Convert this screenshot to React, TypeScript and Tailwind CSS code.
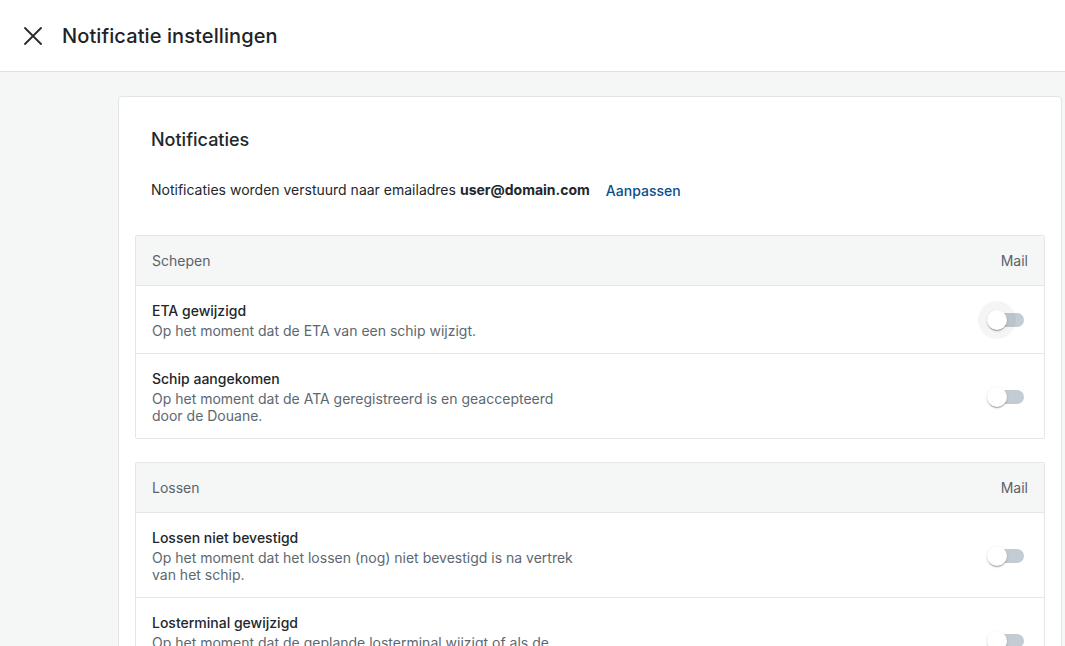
import React from "react";

type Item = { title: string; lines: string[]; hover?: boolean };

function Toggle({ hover }: { hover?: boolean }) {
  return (
    <div className="relative w-[58px] h-[38px] shrink-0">
      <div className="absolute left-[12px] top-[12px] w-[34px] h-[14px] rounded-full bg-[#c3ccd3]" />
      <div
        className={
          "absolute left-0 top-0 w-[38px] h-[38px] rounded-full flex items-center justify-center " +
          (hover ? "bg-[rgba(0,0,0,0.04)]" : "")
        }
      >
        <div className="w-[20px] h-[20px] rounded-full bg-white shadow-[0_2px_1px_-1px_rgba(0,0,0,0.2),0_1px_1px_0_rgba(0,0,0,0.14),0_1px_3px_0_rgba(0,0,0,0.12)]" />
      </div>
    </div>
  );
}

function Section({ name, items }: { name: string; items: Item[] }) {
  return (
    <div className="border border-[#e4e6e7] rounded-[2px]">
      <div className="h-[50px] bg-[#f5f6f6] border-b border-[#e4e6e7] flex items-center justify-between pl-[16px] pr-[16px] text-[14px] text-[#5a636a]">
        <span>{name}</span>
        <span>Mail</span>
      </div>
      {items.map((it, i) => (
        <div
          key={i}
          className={
            "flex items-center justify-between pl-[16px] pr-[8px] pt-[15px] pb-[14px] " +
            (i < items.length - 1 ? "border-b border-[#e4e6e7]" : "")
          }
        >
          <div>
            <div className="text-[14px] leading-[20px] font-medium text-[#22272b]">{it.title}</div>
            <div className="text-[14px] leading-[17px] text-[#5c6870] mt-[1px]">
              {it.lines.map((l, j) => (
                <div key={j}>{l}</div>
              ))}
            </div>
          </div>
          <Toggle hover={it.hover} />
        </div>
      ))}
    </div>
  );
}

export default function App() {
  return (
    <div
      className="w-[1065px] h-[646px] overflow-hidden bg-[#f5f6f6] flex flex-col"
      style={{ fontFamily: "Inter, 'Noto Sans', sans-serif" }}
    >
      <div className="h-[72px] shrink-0 bg-white border-b border-[#dfe1e2] flex items-center pl-[24px]">
        <svg width="18" height="18" viewBox="0 0 18 18" className="mr-[20px]">
          <path d="M1 1 L17 17 M17 1 L1 17" stroke="#2a2a2a" strokeWidth="1.8" strokeLinecap="round" />
        </svg>
        <span className="text-[20px] text-[#1f2326] font-medium tracking-[0.1px]">Notificatie instellingen</span>
      </div>
      <div className="flex-1 pl-[118px] pr-[3px] pt-[24px]">
        <div className="bg-white border border-[#e2e4e5] rounded-[4px] px-[16px] pb-[40px]">
          <div className="px-[16px] pt-[31px] text-[18px] leading-[24px] font-medium text-[#22272b]">Notificaties</div>
          <div className="px-[16px] mt-[27px] flex items-center text-[14px] leading-[20px] text-[#22272b]">
            <span>Notificaties worden verstuurd naar emailadres</span>
            <span className="font-bold ml-[4px]">user@domain.com</span>
            <span className="ml-[16px] mt-[2px] text-[#0b4e8c] font-medium">Aanpassen</span>
          </div>
          <div className="mt-[34px]">
            <Section
              name="Schepen"
              items={[
                { title: "ETA gewijzigd", lines: ["Op het moment dat de ETA van een schip wijzigt."], hover: true },
                {
                  title: "Schip aangekomen",
                  lines: ["Op het moment dat de ATA geregistreerd is en geaccepteerd", "door de Douane."],
                },
              ]}
            />
          </div>
          <div className="mt-[23px]">
            <Section
              name="Lossen"
              items={[
                {
                  title: "Lossen niet bevestigd",
                  lines: ["Op het moment dat het lossen (nog) niet bevestigd is na vertrek", "van het schip."],
                },
                {
                  title: "Losterminal gewijzigd",
                  lines: ["Op het moment dat de geplande losterminal wijzigt of als de", "losterminal bekend wordt."],
                },
              ]}
            />
          </div>
        </div>
      </div>
    </div>
  );
}
